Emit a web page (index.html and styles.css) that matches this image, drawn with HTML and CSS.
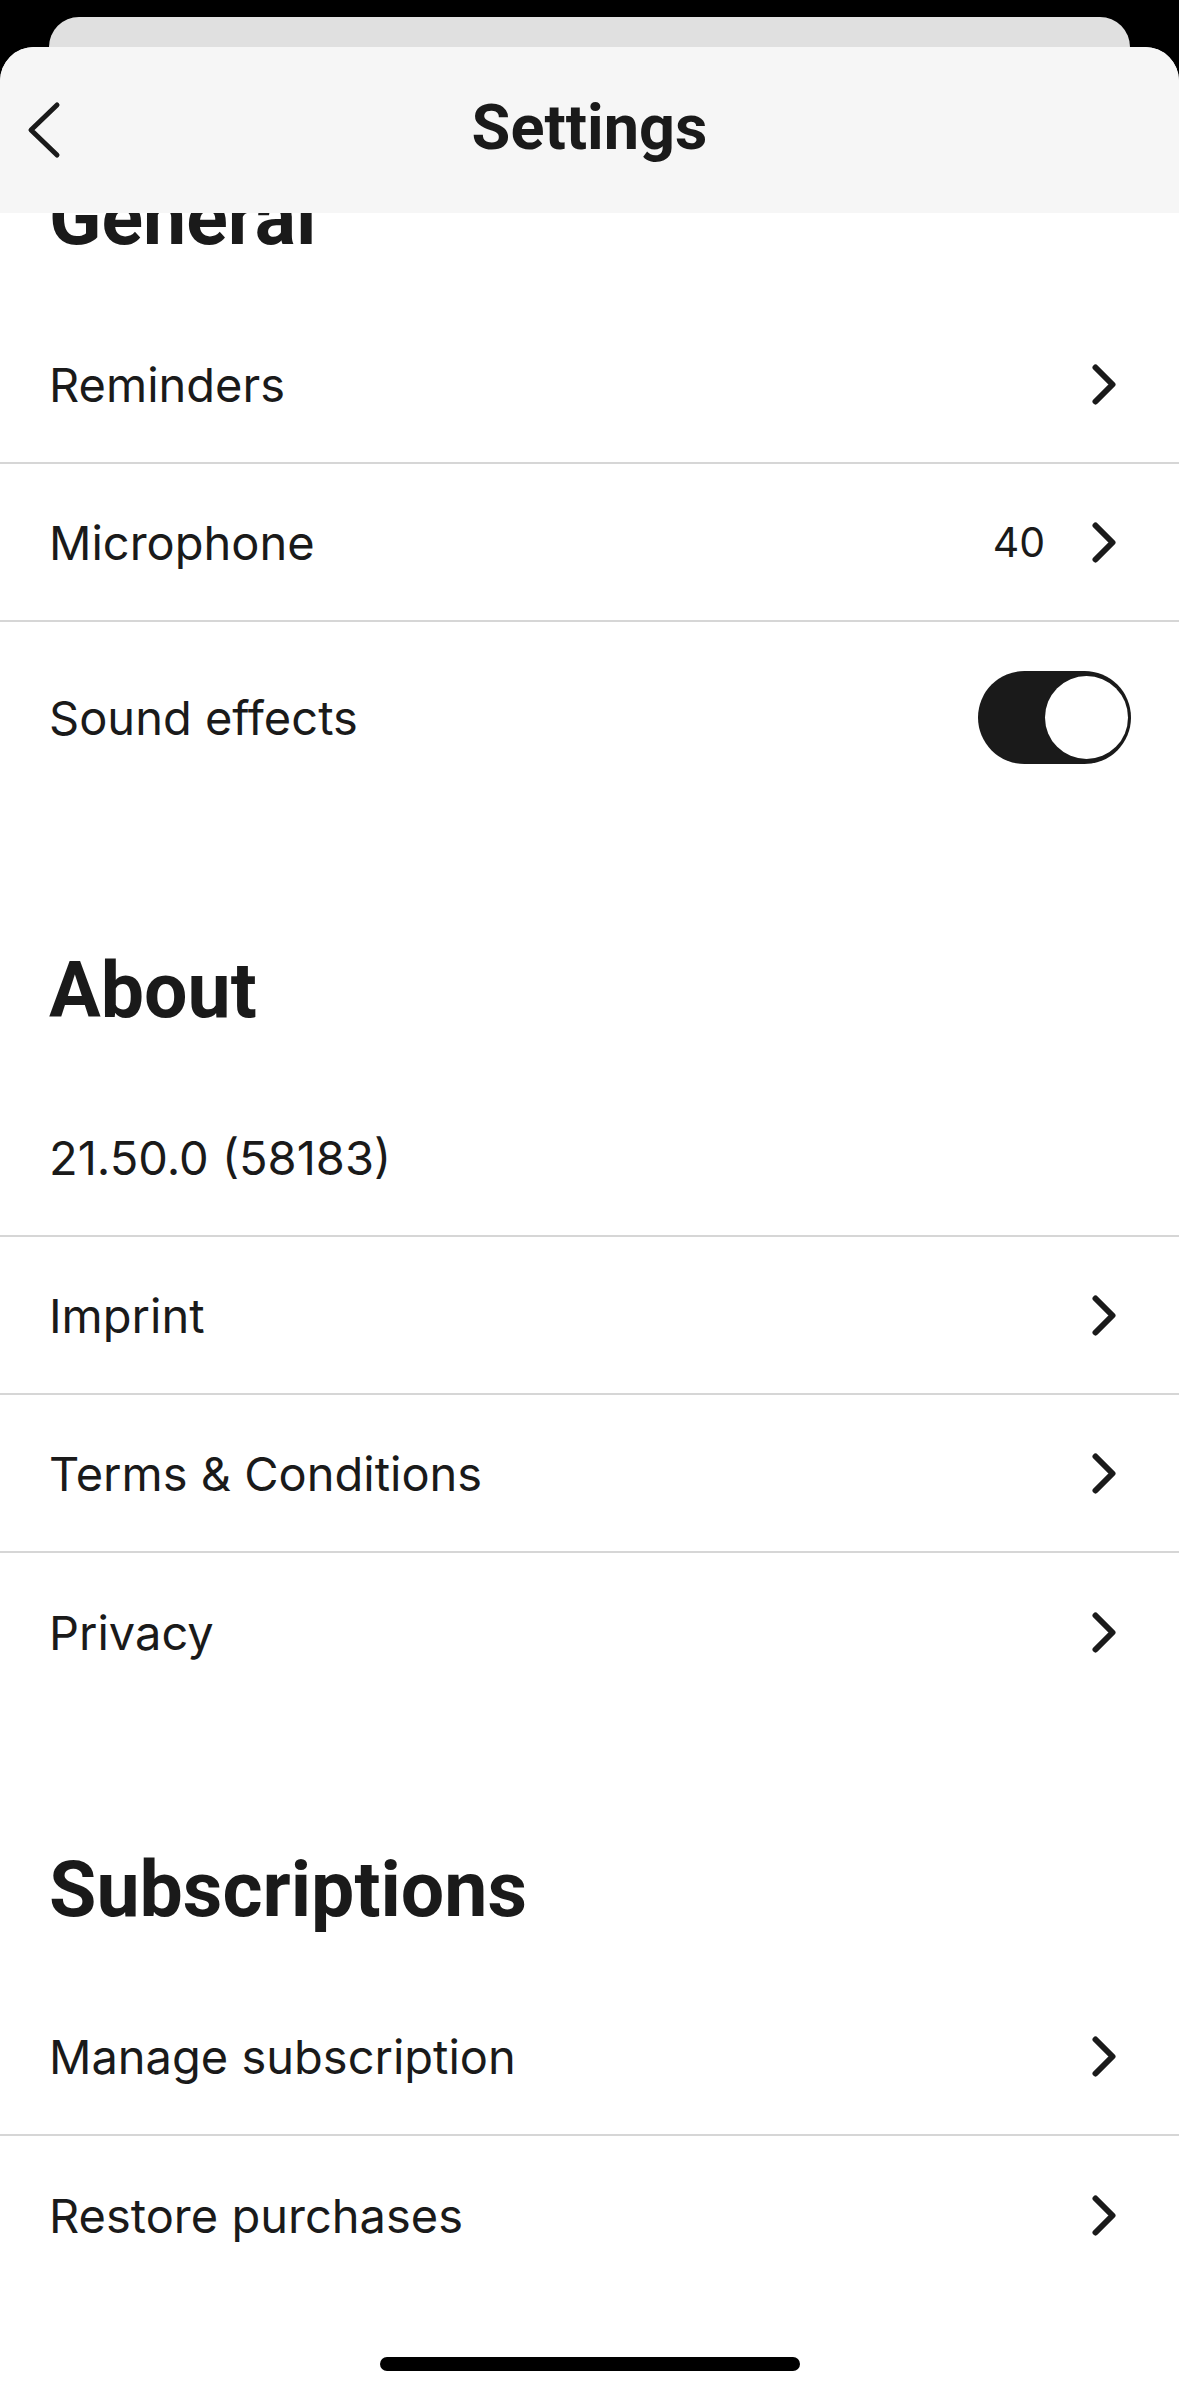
FILE: index.html
```html
<!DOCTYPE html>
<html lang="en">
<head>
<meta charset="utf-8">
<title>Settings</title>
<link rel="stylesheet" href="styles.css">
</head>
<body>
<div class="device">
  <div class="back-card"></div>
  <div class="sheet">
    <header class="nav">
      <button class="back" aria-label="Back">
        <svg class="back-icon" width="36" height="60" viewBox="0 0 36 60"><path d="M32 5 L6 30 L32 55" fill="none" stroke="#1a1a1a" stroke-width="5" stroke-linecap="round" stroke-linejoin="round"/></svg>
      </button>
      <h1 class="nav-title">Settings</h1>
      <span class="nav-spacer"></span>
    </header>

    <main class="content">
      <section class="group group-first">
        <h2 class="group-title">General</h2>
        <div class="row">
          <span class="label">Reminders</span>
          <svg class="chev" width="24" height="41" viewBox="0 0 24 41"><path d="M3.5 3.5 L20.5 20.5 L3.5 37.5" fill="none" stroke="#1a1a1a" stroke-width="6" stroke-linecap="round" stroke-linejoin="round"/></svg>
        </div>
        <div class="row">
          <span class="label">Microphone</span>
          <span class="value">40</span>
          <svg class="chev" width="24" height="41" viewBox="0 0 24 41"><path d="M3.5 3.5 L20.5 20.5 L3.5 37.5" fill="none" stroke="#1a1a1a" stroke-width="6" stroke-linecap="round" stroke-linejoin="round"/></svg>
        </div>
        <div class="row row-toggle">
          <span class="label">Sound effects</span>
          <span class="toggle" role="switch" aria-checked="true"><span class="knob"></span></span>
        </div>
      </section>

      <section class="group">
        <h2 class="group-title">About</h2>
        <div class="row">
          <span class="label">21.50.0 (58183)</span>
        </div>
        <div class="row">
          <span class="label">Imprint</span>
          <svg class="chev" width="24" height="41" viewBox="0 0 24 41"><path d="M3.5 3.5 L20.5 20.5 L3.5 37.5" fill="none" stroke="#1a1a1a" stroke-width="6" stroke-linecap="round" stroke-linejoin="round"/></svg>
        </div>
        <div class="row">
          <span class="label">Terms &amp; Conditions</span>
          <svg class="chev" width="24" height="41" viewBox="0 0 24 41"><path d="M3.5 3.5 L20.5 20.5 L3.5 37.5" fill="none" stroke="#1a1a1a" stroke-width="6" stroke-linecap="round" stroke-linejoin="round"/></svg>
        </div>
        <div class="row">
          <span class="label">Privacy</span>
          <svg class="chev" width="24" height="41" viewBox="0 0 24 41"><path d="M3.5 3.5 L20.5 20.5 L3.5 37.5" fill="none" stroke="#1a1a1a" stroke-width="6" stroke-linecap="round" stroke-linejoin="round"/></svg>
        </div>
      </section>

      <section class="group">
        <h2 class="group-title">Subscriptions</h2>
        <div class="row">
          <span class="label">Manage subscription</span>
          <svg class="chev" width="24" height="41" viewBox="0 0 24 41"><path d="M3.5 3.5 L20.5 20.5 L3.5 37.5" fill="none" stroke="#1a1a1a" stroke-width="6" stroke-linecap="round" stroke-linejoin="round"/></svg>
        </div>
        <div class="row">
          <span class="label">Restore purchases</span>
          <svg class="chev" width="24" height="41" viewBox="0 0 24 41"><path d="M3.5 3.5 L20.5 20.5 L3.5 37.5" fill="none" stroke="#1a1a1a" stroke-width="6" stroke-linecap="round" stroke-linejoin="round"/></svg>
        </div>
      </section>
    </main>

    <div class="home-indicator"></div>
  </div>
</div>
</body>
</html>
```
FILE: styles.css
```css
html, body {
  margin: 0;
  padding: 0;
  background: #000;
}

body {
  width: 1179px;
  height: 2396px;
  overflow: hidden;
  font-family: Inter, "Liberation Sans", Arial, sans-serif;
  color: #1a1a1a;
}

.device {
  box-sizing: border-box;
  height: 2396px;
  padding-top: 17px;
  display: flex;
  flex-direction: column;
}

.back-card {
  flex: 0 0 30px;
  margin: 0 49px;
  background: #e0e0e0;
  border-radius: 34px 34px 0 0;
}

.sheet {
  position: relative;
  flex: 1;
  background: #fff;
  border-radius: 34px 34px 0 0;
  overflow: hidden;
}

.nav {
  position: absolute;
  top: 0;
  left: 0;
  right: 0;
  height: 166px;
  background: #f6f6f6;
  display: grid;
  grid-template-columns: 1fr auto 1fr;
  align-items: center;
  z-index: 2;
}

.back {
  justify-self: start;
  border: 0;
  background: none;
  padding: 0 0 0 25px;
  margin: 0;
  display: flex;
  align-items: center;
}

.back-icon {
  display: block;
}

.nav-title {
  margin: 0;
  font-family: Roboto, "Liberation Sans", Arial, sans-serif;
  font-size: 63px;
  line-height: 74px;
  font-weight: 700;
  position: relative;
  top: -2px;
}

.content {
  padding-top: 126px;
}

.group-title {
  margin: 0;
  padding: 134px 49px 43px;
  font-family: Roboto, "Liberation Sans", Arial, sans-serif;
  font-size: 77px;
  line-height: 90px;
  font-weight: 700;
}

.group-first .group-title {
  padding-top: 0;
}

.row {
  box-sizing: border-box;
  height: 158px;
  display: flex;
  align-items: center;
  padding: 0 48px 0 49px;
  font-size: 47px;
  border-bottom: 2px solid #d6d6d6;
}

.row:last-child {
  border-bottom: none;
}

.row-toggle {
  height: 190px;
}

.label {
  flex: 1;
}

.value {
  font-size: 41px;
  margin-right: 47px;
}

.chev {
  display: block;
  margin-right: 15px;
}

.toggle {
  box-sizing: border-box;
  width: 153px;
  height: 93px;
  padding: 5px 3px;
  border-radius: 47px;
  background: #1a1a1a;
  display: flex;
  justify-content: flex-end;
  align-items: center;
}

.knob {
  width: 83px;
  height: 83px;
  border-radius: 50%;
  background: #fff;
}

.home-indicator {
  position: absolute;
  left: 50%;
  bottom: 25px;
  width: 420px;
  height: 14px;
  margin-left: -210px;
  border-radius: 7px;
  background: #000;
}
```
